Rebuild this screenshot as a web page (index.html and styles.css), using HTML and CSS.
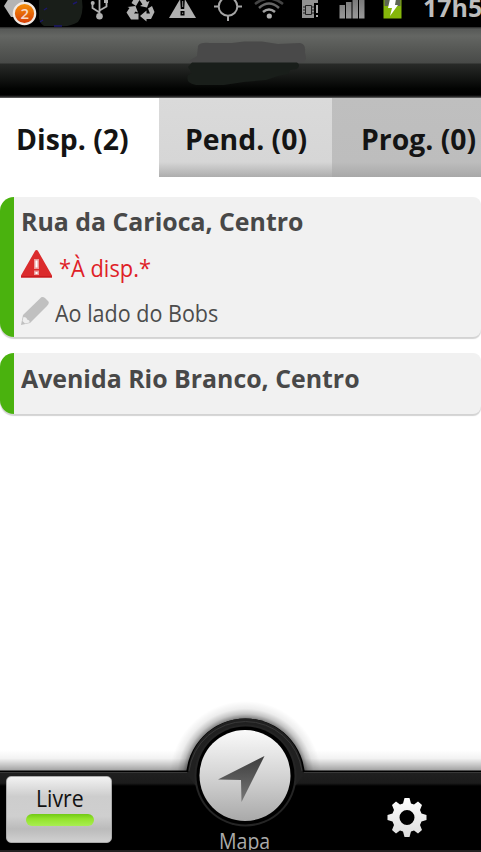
FILE: index.html
```
<!DOCTYPE html>
<html lang="pt-BR">
<head>
<meta charset="utf-8">
<title>Corridas</title>
<link rel="stylesheet" href="styles.css">
</head>
<body>
<div class="app">
  <div class="status">
    <svg class="status-icons" width="420" height="27" viewBox="0 0 420 27">
      <defs>
        <linearGradient id="badge" x1="0" y1="0" x2="0" y2="1"><stop offset="0" stop-color="#f79408"/><stop offset="1" stop-color="#d43a08"/></linearGradient>
        <linearGradient id="bars" x1="0" y1="0" x2="0" y2="1"><stop offset="0" stop-color="#777"/><stop offset="1" stop-color="#999"/></linearGradient>
      </defs>
      <path d="M4 6 L9 -2 H24 V17 H11 Z" fill="#b4b4b4"/>
      <path d="M39 0 H82 Q84 14 78 22 Q70 27 60 26 H44 Q38 22 39 14 Z" fill="#191e19"/>
      <path d="M73 4 l4-2 M44 10 l3-2 M40 22 l3-2 M54 26 h8" stroke="#1b176b" stroke-width="1.5"/>
      <circle cx="24.500" cy="13.500" r="10.700" fill="url(#badge)" stroke="#f1e9e3" stroke-width="2.200"/>
      <path d="M99.500 0 V16 M99.500 12.500 L92.500 8 V3 M99.500 10.500 L106.500 6.500 V1" fill="none" stroke="#b0b0b0" stroke-width="1.800"/>
      <g fill="#b0b0b0"><circle cx="99.500" cy="16.300" r="3.300"/><circle cx="92.700" cy="3" r="2"/><path d="M104 0h4v3h-4z"/></g>
      <g fill="#b0b0b0">
        <path d="M131.500 3 L135 -3 H144 L147 2 L149.500 1 L147 7.500 L140 6 L142.500 4.500 L139.500 0 L136 6 Z"/>
        <path d="M127.500 7 L135.500 6 L138 12.500 L135.500 11.500 L134 13.500 H138.500 V19.500 H131 L126.500 12.500 L129.500 8 Z"/>
        <path d="M148 8.500 L152 6 L154.500 12 L151 19 H146.500 V21.500 L140 16 L146.500 10.500 V13.500 H150 Z"/>
        <path d="M182.500 -5 L196 18 H169 Z"/>
      </g>
      <path d="M180.200 0h4.600l-.6 9h-3.400z M180.500 11h4v4.500h-4z" fill="#000"/>
      <path d="M182 1h1.200v6H182z M182 12.500h1.200v1.500H182z" fill="#777"/>
      <g fill="none" stroke="#a5a5a5" stroke-width="2">
        <circle cx="228" cy="6.500" r="9.300"/><path d="M214 6.500h5 M237 6.500h5 M228 16v5"/>
      </g>
      <g fill="none" stroke-width="2.500">
        <path d="M255 4 Q269 -7 283 4" stroke="#444"/><path d="M259 8 Q269 -1 279 8" stroke="#666"/><path d="M263 12 Q269 7 275 12" stroke="#a0a0a0"/>
      </g>
      <circle cx="269.300" cy="16" r="2.600" fill="#b2b2b2"/>
      <path d="M302 0h16v3h-16z M302 3h12v15h-12z" fill="#929292"/>
      <path d="M305.500 5.500h6v9h-6z M303 7h3 M303 10h3 M303 13h3 M311 7h3 M311 10h3 M311 13h3" fill="none" stroke="#222" stroke-width="1"/>
      <path d="M316 5h2v8h-2z M316 15h2v2h-2z" fill="#aaa"/>
      <path d="M339.500 5h5.500v13.500h-5.500z M346 2h5.500v16.500h-5.500z M352.500 -1h5.500v19.500h-5.500z M359 -2h5.500v20.500H359z" fill="url(#bars)"/>
      <path d="M383.500 -2h18v20.500h-18z" fill="#85b60a"/><path d="M384.500 0h16v6h-16z" fill="#5e6653"/>
      <path d="M390 -1h6l-1 6h3l-8 11 2-8h-4z" fill="#fff"/>
    </svg>
    <span class="badge-count">2</span>
    <span class="clock">17h5</span>
  </div>
  <header class="titlebar">
    <svg width="140" height="60" viewBox="0 0 140 60">
      <path d="M24 19 Q26 15 36 16 L58 16 L70 14.500 H88 L104 17 L126 16 Q132 17 131 25 L132 31 Q132 36 125 36 H16 Q14 34 20 31 L23 29 Z" fill="#494949"/>
      <path d="M14 40 L18 35.500 H123 Q127 38 123 42 L116 43 L114 47 L104 49 L92 53 L70 55 L50 58 H22 Q11 56 14 48 L18 46 Z" fill="#191e1a"/>
    </svg>
  </header>
  <nav class="tabs">
    <div class="tab active"><span>Disp. (2)</span></div>
    <div class="tab pend"><span>Pend. (0)</span></div>
    <div class="tab prog"><span>Prog. (0)</span></div>
  </nav>
  <main class="list">
    <article class="card first">
      <h2>Rua da Carioca, Centro</h2>
      <div class="line alert">
        <svg width="32" height="28" viewBox="0 0 32 28"><path d="M15.500 0 Q16.500 0 17 1 L31 25.500 V27.500 H0 V25.500 L14 1 Q14.500 0 15.500 0Z" fill="#db2b2c"/><path d="M0 26H31V27.500H0z" fill="#c81c20"/><path d="M13 9h5v10h-5z M13 20.500h5v4.500h-5z" fill="#eb9a9a"/><path d="M14.500 10.500h2v7h-2z M14.500 22h2v2h-2z" fill="#fff"/></svg>
        <span class="t-alert">*À disp.*</span>
      </div>
      <div class="line note">
        <svg width="28" height="28" viewBox="0 0 28 28"><path d="M0 28 L2 18 L19 1.500 Q21-1 24 1 L27 4 Q29 6 26 9 L9 26 Z" fill="#c0c0c0"/><path d="M1.500 24 L2.500 20 Q6 20 6 22.500 Q9 23 8.500 25.500 L4 26.500 Z" fill="#eee"/></svg>
        <span class="t-note">Ao lado do Bobs</span>
      </div>
    </article>
    <article class="card second"><h2>Avenida Rio Branco, Centro</h2></article>
  </main>
  <footer class="footer">
    <svg class="dock" width="481" height="152" viewBox="0 0 481 152">
      <defs>
        <linearGradient id="shade" x1="0" y1="0" x2="0" y2="1"><stop offset="0" stop-color="#000" stop-opacity="0"/><stop offset=".4" stop-color="#000" stop-opacity=".05"/><stop offset="1" stop-color="#000" stop-opacity=".38"/></linearGradient>
        <radialGradient id="halo" gradientUnits="userSpaceOnUse" cx="245.500" cy="77" r="76"><stop offset=".77" stop-color="#000" stop-opacity=".5"/><stop offset=".83" stop-color="#000" stop-opacity=".23"/><stop offset=".9" stop-color="#000" stop-opacity=".07"/><stop offset="1" stop-color="#000" stop-opacity="0"/></radialGradient>
        <linearGradient id="rim" x1="0" y1="0" x2="0" y2="1"><stop offset="0" stop-color="#202020"/><stop offset=".8" stop-color="#1b1b1b"/><stop offset="1" stop-color="#000"/></linearGradient>
        <linearGradient id="knob" x1="0" y1="0" x2="0" y2="1"><stop offset="0" stop-color="#fafafa"/><stop offset=".55" stop-color="#d0d0d0"/><stop offset="1" stop-color="#a9a9a9"/></linearGradient>
        <linearGradient id="arrow" x1="0" y1="0" x2="0" y2="1"><stop offset="0" stop-color="#3d3d3d"/><stop offset="1" stop-color="#777"/></linearGradient>
        <linearGradient id="gear" x1="0" y1="0" x2="0" y2="1"><stop offset="0" stop-color="#fff"/><stop offset="1" stop-color="#dcdcdc"/></linearGradient>
      </defs>
      <path d="M0 50H481V71H0z" fill="url(#shade)"/>
      <circle cx="245.500" cy="77" r="76" fill="url(#halo)"/>
      <path d="M0 70.500H481V152H0z" fill="#000"/>
      <circle cx="245.500" cy="78" r="59.500" fill="#000"/>
      <path d="M0 72H481V86H0z" fill="url(#rim)"/>
      <path d="M0 72.500H187 M304 72.500H481" stroke="#383838"/>
      <path d="M188 76 A57.500 57.500 0 0 1 303 76 L296 85 H195Z" fill="#202020"/>
      <path d="M189 71 A57 57 0 0 1 302 71" fill="none" stroke="#383838"/>
      <circle cx="245.500" cy="75.500" r="51" fill="#252525"/>
      <circle cx="245.500" cy="75.500" r="49" fill="#000"/>
      <circle cx="245" cy="75.500" r="45.500" fill="url(#knob)"/>
      <path d="M264.500 56 L218 79.500 L241 80 L241.500 102 Z" fill="url(#arrow)"/>
      <path transform="translate(407 117.500)" fill="url(#gear)" fill-rule="evenodd" d="M-2.500-19.500H2.500L4-14L7-13L11-16L15-12.500L13-7.500L14.500-4L19.500-2.500V2.500L14.500 4L13 7.500L15 12.500L11 16L7 13L4 14L2.500 19.500H-2.500L-4 14L-7 13L-11 16L-15 12.500L-13 7.500L-14.500 4L-19.500 2.500V-2.500L-14.500-4L-13-7.500L-15-12.500L-11-16L-7-13L-4-14Z M0-7.500A7.500 7.500 0 1 0 0 7.500A7.500 7.500 0 1 0 0-7.500Z"/>
      <path d="M0 150H481V152H0z" fill="#242122"/>
    </svg>
    <div class="free"><span class="t-free">Livre</span><i class="led"></i></div>
    <span class="map">Mapa</span>
  </footer>
</div>
</body>
</html>
```
FILE: styles.css
```
* { box-sizing: border-box; }
body { margin: 0; background: #fff; font-family: "Open Sans", "Noto Sans", sans-serif; }
.app { width: 481px; height: 852px; overflow: hidden; display: flex; flex-direction: column; }
.app span, .app h2 { white-space: nowrap; line-height: 1; }
.status { height: 27px; background: #000; position: relative; flex: none; overflow: hidden; }
.status-icons { display: block; }
.badge-count { position: absolute; left: 20.500px; top: 6px; font-size: 15px; font-weight: 600; color: #f6d9c9; }
.clock { position: absolute; left: 423px; top: -5px; font-size: 25px; font-weight: 700; color: #bdbdbd; }
.titlebar { height: 71px; flex: none; padding-left: 174px; background: linear-gradient(#252525 0, #575957 2px, #646663 9px, #565855 22px, #484a48 36px, #282a28 37px, #151715 50px, #020302 62px, #000 68px, #333 70px, #777 71px); }
.titlebar svg { display: block; }
.tabs { height: 80px; flex: none; display: grid; grid-template-columns: 159px 173px 149px; }
.tab { height: 79px; padding-top: 27px; color: #141414; font-size: 28px; font-weight: 700; }
.active { padding-left: 16px; }
.pend { padding-left: 26px; background: linear-gradient(#dadada, #d6d6d6 64px, #adadad); }
.prog { padding-left: 29px; background: linear-gradient(#bfbfbf, #bdbdbd 64px, #a8a8a8); }
.tab span, .card span, .card h2, .footer span { display: block; width: max-content; transform-origin: 0 50%; }
.tab span { transform: scaleX(1.013); }
.list { flex: 1; padding-top: 19px; }
.card { background: #f1f1f1; border-left: 14px solid #4ab20e; border-radius: 14px 8px 8px 14px; box-shadow: 0 2px 1px #d3d3d3; padding-left: 7px; }
.first { height: 140px; padding-top: 12px; }
.second { height: 61px; margin-top: 16px; padding-top: 13px; }
.card h2 { margin: 0; font-size: 25px; font-weight: 700; color: #484848; transform: scaleX(.995); }
.line { display: flex; align-items: center; color: #4c4c4c; }
.alert { margin-top: 14px; height: 31px; gap: 6px; color: #df2026; }
.note { margin-top: 16px; height: 32px; gap: 6px; }
.t-alert { font-size: 24px; padding-top: 9px; transform: scaleX(.91); }
.t-note { font-size: 24px; padding-top: 4px; transform: scaleX(.897); }
.footer { height: 152px; flex: none; position: relative; }
.dock { display: block; }
.free { position: absolute; left: 6px; top: 76px; width: 106px; height: 67px; border-radius: 5px; background: linear-gradient(#f2f2f2, #cdcdcd 30%, #cfcfcf 60%, #bbb 80%, #d0d0d0); border: 1px solid #aaa; padding: 9px 0 0 29px; font-size: 24px; color: #111; }
.t-free { transform: scaleX(.885); }
.led { display: block; width: 68px; height: 12px; margin: 4px 0 0 -10px; border-radius: 6px; background: linear-gradient(#71c914, #93e32c 40%, #a8ee51); }
.map { position: absolute; left: 219px; top: 131px; font-size: 21px; color: #aaa; transform: scaleX(.93); clip-path: inset(0 0 2px 0); }
```
